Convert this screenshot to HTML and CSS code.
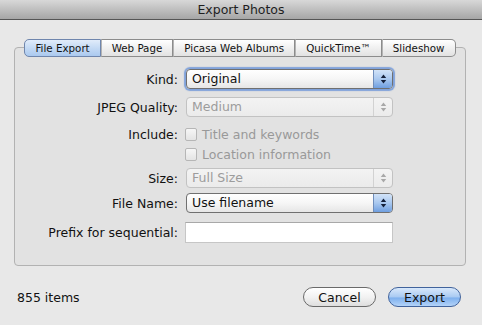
FILE: index.html
```html
<!DOCTYPE html>
<html>
<head>
    <title>Export Photos</title>
    <link rel="stylesheet" href="styles.css">
</head>
<body>
    <div class="titlebar">Export Photos</div>

    <div class="content">
        <div class="tabs">
            <span class="tab selected">File Export</span>
            <span class="tab">Web Page</span>
            <span class="tab">Picasa Web Albums</span>
            <span class="tab">QuickTime™</span>
            <span class="tab">Slideshow</span>
        </div>

        <div class="group">
            <div class="row row-kind">
                <span class="label">Kind:</span>
                <div class="popup focused">
                    <span class="popup-text">Original</span>
                    <span class="popup-arrows">
                        <svg width="7" height="10" viewBox="0 0 7 10"><polygon points="3.5,0.5 0.8,4 6.2,4"/><polygon points="0.8,6 6.2,6 3.5,9.5"/></svg>
                    </span>
                </div>
            </div>
            <div class="row row-quality">
                <span class="label">JPEG Quality:</span>
                <div class="popup disabled">
                    <span class="popup-text">Medium</span>
                    <span class="popup-arrows">
                        <svg width="7" height="10" viewBox="0 0 7 10"><polygon points="3.5,0.5 0.8,4 6.2,4"/><polygon points="0.8,6 6.2,6 3.5,9.5"/></svg>
                    </span>
                </div>
            </div>
            <div class="row row-include">
                <span class="label">Include:</span>
                <span class="checkbox"></span>
                <span class="check-text">Title and keywords</span>
            </div>
            <div class="row row-location">
                <span class="label"></span>
                <span class="checkbox"></span>
                <span class="check-text">Location information</span>
            </div>
            <div class="row row-size">
                <span class="label">Size:</span>
                <div class="popup disabled">
                    <span class="popup-text">Full Size</span>
                    <span class="popup-arrows">
                        <svg width="7" height="10" viewBox="0 0 7 10"><polygon points="3.5,0.5 0.8,4 6.2,4"/><polygon points="0.8,6 6.2,6 3.5,9.5"/></svg>
                    </span>
                </div>
            </div>
            <div class="row row-filename">
                <span class="label">File Name:</span>
                <div class="popup">
                    <span class="popup-text">Use filename</span>
                    <span class="popup-arrows">
                        <svg width="7" height="10" viewBox="0 0 7 10"><polygon points="3.5,0.5 0.8,4 6.2,4"/><polygon points="0.8,6 6.2,6 3.5,9.5"/></svg>
                    </span>
                </div>
            </div>
            <div class="row row-prefix">
                <span class="label">Prefix for sequential:</span>
                <input type="text" class="text-field">
            </div>
        </div>

        <div class="footer">
            <span class="count">855 items</span>
            <div class="buttons">
                <button class="button">Cancel</button>
                <button class="button default">Export</button>
            </div>
        </div>
    </div>
</body>
</html>
```

FILE: styles.css
```css
body {
    margin: 0;
    width: 482px;
    height: 325px;
    overflow: hidden;
    background-color: #e8e8e8;
    font-family: "DejaVu Sans", sans-serif;
    font-size: 12.5px;
    color: #111;
}
.titlebar {
    height: 19px;
    line-height: 19px;
    border-bottom: 1px solid #555;
    background: linear-gradient(#d8d8d8, #a6a6a6);
    text-align: center;
    color: #1e1e1e;
}
.content {
    padding: 19px 16px 0 14px;
}
.tabs {
    display: flex;
    justify-content: center;
    position: relative;
    z-index: 1;
    height: 18px;
}
.tab {
    height: 16px;
    line-height: 16px;
    padding: 0 10px;
    font-size: 10.3px;
    border: 1px solid #8c8c8c;
    border-left: 1px solid #b4b4b4;
    background: linear-gradient(#ffffff, #f0f0f0 50%, #e2e2e2);
    color: #111;
}
.tab:first-child {
    border-left-color: #8c8c8c;
    border-radius: 5px 0 0 5px;
}
.tab:last-child {
    border-radius: 0 5px 5px 0;
}
.tab.selected {
    border-color: #6f86ad;
    background: linear-gradient(#e1ecfa, #c4daf4 50%, #abc9ef);
}
.group {
    margin-top: -10px;
    border: 1px solid #b2b2b2;
    border-radius: 4px;
    background-color: #e2e2e2;
    padding: 21px 0 22px 0;
}
.row {
    display: flex;
    align-items: center;
    height: 20px;
}
.row-quality { margin-top: 8px; }
.row-include { margin-top: 7px; }
.row-size { margin-top: 4px; }
.row-filename { margin-top: 5px; }
.row-prefix { margin-top: 9px; height: 21px; }
.label {
    width: 163px;
    margin-right: 7px;
    text-align: right;
}
.popup {
    display: flex;
    box-sizing: border-box;
    width: 207px;
    height: 20px;
    margin-left: 1px;
    border: 1px solid #707070;
    border-radius: 4px;
    background: linear-gradient(#ffffff, #f6f6f6 50%, #e6e6e6);
    overflow: hidden;
}
.popup.focused {
    box-shadow: 0 0 1px 2px rgba(95, 140, 215, 0.75);
}
.popup-text {
    flex: 1;
    padding-left: 5px;
    line-height: 18px;
}
.popup-arrows {
    width: 18px;
    display: flex;
    align-items: center;
    justify-content: center;
    border-left: 1px solid #6f8dbb;
    background: linear-gradient(#d2e3f8, #a9c8ef 50%, #6f9fe0);
}
.popup-arrows svg {
    fill: #14203a;
}
.popup.disabled {
    border-color: #c2c2c2;
    background: linear-gradient(#f3f3f3, #ebebeb);
}
.popup.disabled .popup-text {
    color: #9c9c9c;
}
.popup.disabled .popup-arrows {
    border-left-color: #d2d2d2;
    background: none;
}
.popup.disabled .popup-arrows svg {
    fill: #a8a8a8;
}
.checkbox {
    box-sizing: border-box;
    width: 12px;
    height: 13px;
    border: 1px solid #b6b6b6;
    border-radius: 2px;
    background: linear-gradient(#f6f6f6, #e4e4e4);
}
.check-text {
    margin-left: 5px;
    color: #999;
}
.text-field {
    box-sizing: border-box;
    width: 208px;
    height: 21px;
    margin: 0;
    border: 1px solid #c6c6c6;
    border-top-color: #a8a8a8;
    background-color: #fff;
}
.footer {
    display: flex;
    justify-content: space-between;
    align-items: center;
    margin-top: 21px;
    height: 20px;
    padding: 0 5px 0 3px;
}
.buttons {
    display: flex;
    gap: 12px;
}
.button {
    box-sizing: border-box;
    width: 73px;
    height: 20px;
    padding: 0;
    border: 1px solid #6a6a6a;
    border-radius: 10px;
    background: linear-gradient(#ffffff, #f2f2f2 50%, #dedede);
    font-family: "DejaVu Sans", sans-serif;
    font-size: 12.5px;
    color: #111;
}
.button.default {
    border-color: #41639c;
    background: linear-gradient(#d8e8fb, #a9caf2 50%, #7eb0ee 55%, #b3d3f8);
}
```
